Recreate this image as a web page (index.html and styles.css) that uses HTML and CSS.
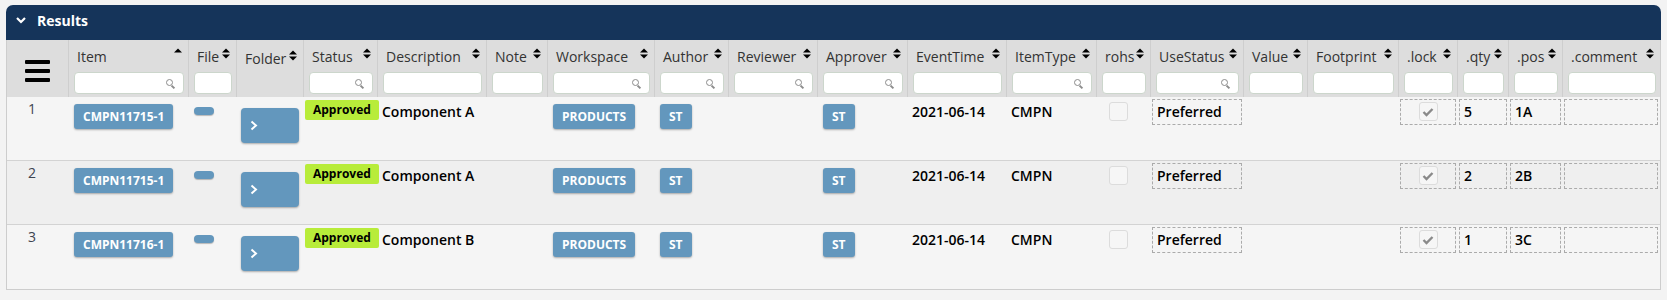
FILE: index.html
```html
<!DOCTYPE html>
<html lang="en">
<head>
  <meta charset="UTF-8">
  <title>Results</title>
  <link rel="stylesheet" href="styles.css">
</head>
<body>
  <div class="panel">
    <div class="panel-head">
      <svg class="chev" width="10" height="7" viewBox="0 0 10 7"><path d="M1 1 L5 5 L9 1" fill="none" stroke="#fff" stroke-width="2.2"/></svg>
      <span>Results</span>
    </div>

    <div class="panel-body">
      <table class="grid">
        <colgroup>
          <col style="width:62px"><col style="width:120px"><col style="width:48px"><col style="width:67px">
          <col style="width:74px"><col style="width:109px"><col style="width:61px"><col style="width:107px">
          <col style="width:74px"><col style="width:89px"><col style="width:90px"><col style="width:99px">
          <col style="width:90px"><col style="width:54px"><col style="width:93px"><col style="width:64px">
          <col style="width:91px"><col style="width:59px"><col style="width:51px"><col style="width:54px">
          <col style="width:97px">
        </colgroup>
        <thead>
          <tr>
            <th class="menu-col">
              <svg width="25" height="22" viewBox="0 0 25 22"><rect y="0" width="25" height="4" rx="1"/><rect y="9" width="25" height="4" rx="1"/><rect y="18" width="25" height="4" rx="1"/></svg>
            </th>
            <th><div class="th-label"><span>Item</span><svg class="sort" width="8" height="11" viewBox="0 0 8 11"><path d="M0 4.5 L4 0.5 L8 4.5 Z"/></svg></div><div class="filter search"><input type="text"></div></th>
            <th><div class="th-label"><span>File</span><svg class="sort" width="8" height="11" viewBox="0 0 8 11"><path d="M0 4.5 L4 0.5 L8 4.5 Z M0 6.5 L8 6.5 L4 10.5 Z"/></svg></div><div class="filter"><input type="text"></div></th>
            <th><div class="th-label low"><span>Folder</span><svg class="sort" width="8" height="11" viewBox="0 0 8 11"><path d="M0 4.5 L4 0.5 L8 4.5 Z M0 6.5 L8 6.5 L4 10.5 Z"/></svg></div></th>
            <th><div class="th-label"><span>Status</span><svg class="sort" width="8" height="11" viewBox="0 0 8 11"><path d="M0 4.5 L4 0.5 L8 4.5 Z M0 6.5 L8 6.5 L4 10.5 Z"/></svg></div><div class="filter search"><input type="text"></div></th>
            <th><div class="th-label"><span>Description</span><svg class="sort" width="8" height="11" viewBox="0 0 8 11"><path d="M0 4.5 L4 0.5 L8 4.5 Z M0 6.5 L8 6.5 L4 10.5 Z"/></svg></div><div class="filter"><input type="text"></div></th>
            <th><div class="th-label"><span>Note</span><svg class="sort" width="8" height="11" viewBox="0 0 8 11"><path d="M0 4.5 L4 0.5 L8 4.5 Z M0 6.5 L8 6.5 L4 10.5 Z"/></svg></div><div class="filter"><input type="text"></div></th>
            <th><div class="th-label"><span>Workspace</span><svg class="sort" width="8" height="11" viewBox="0 0 8 11"><path d="M0 4.5 L4 0.5 L8 4.5 Z M0 6.5 L8 6.5 L4 10.5 Z"/></svg></div><div class="filter search"><input type="text"></div></th>
            <th><div class="th-label"><span>Author</span><svg class="sort" width="8" height="11" viewBox="0 0 8 11"><path d="M0 4.5 L4 0.5 L8 4.5 Z M0 6.5 L8 6.5 L4 10.5 Z"/></svg></div><div class="filter search"><input type="text"></div></th>
            <th><div class="th-label"><span>Reviewer</span><svg class="sort" width="8" height="11" viewBox="0 0 8 11"><path d="M0 4.5 L4 0.5 L8 4.5 Z M0 6.5 L8 6.5 L4 10.5 Z"/></svg></div><div class="filter search"><input type="text"></div></th>
            <th><div class="th-label"><span>Approver</span><svg class="sort" width="8" height="11" viewBox="0 0 8 11"><path d="M0 4.5 L4 0.5 L8 4.5 Z M0 6.5 L8 6.5 L4 10.5 Z"/></svg></div><div class="filter search"><input type="text"></div></th>
            <th><div class="th-label"><span>EventTime</span><svg class="sort" width="8" height="11" viewBox="0 0 8 11"><path d="M0 4.5 L4 0.5 L8 4.5 Z M0 6.5 L8 6.5 L4 10.5 Z"/></svg></div><div class="filter"><input type="text"></div></th>
            <th><div class="th-label"><span>ItemType</span><svg class="sort" width="8" height="11" viewBox="0 0 8 11"><path d="M0 4.5 L4 0.5 L8 4.5 Z M0 6.5 L8 6.5 L4 10.5 Z"/></svg></div><div class="filter search"><input type="text"></div></th>
            <th><div class="th-label"><span>rohs</span><svg class="sort" width="8" height="11" viewBox="0 0 8 11"><path d="M0 4.5 L4 0.5 L8 4.5 Z M0 6.5 L8 6.5 L4 10.5 Z"/></svg></div><div class="filter"><input type="text"></div></th>
            <th><div class="th-label"><span>UseStatus</span><svg class="sort" width="8" height="11" viewBox="0 0 8 11"><path d="M0 4.5 L4 0.5 L8 4.5 Z M0 6.5 L8 6.5 L4 10.5 Z"/></svg></div><div class="filter search"><input type="text"></div></th>
            <th><div class="th-label"><span>Value</span><svg class="sort" width="8" height="11" viewBox="0 0 8 11"><path d="M0 4.5 L4 0.5 L8 4.5 Z M0 6.5 L8 6.5 L4 10.5 Z"/></svg></div><div class="filter"><input type="text"></div></th>
            <th><div class="th-label"><span>Footprint</span><svg class="sort" width="8" height="11" viewBox="0 0 8 11"><path d="M0 4.5 L4 0.5 L8 4.5 Z M0 6.5 L8 6.5 L4 10.5 Z"/></svg></div><div class="filter"><input type="text"></div></th>
            <th><div class="th-label"><span>.lock</span><svg class="sort" width="8" height="11" viewBox="0 0 8 11"><path d="M0 4.5 L4 0.5 L8 4.5 Z M0 6.5 L8 6.5 L4 10.5 Z"/></svg></div><div class="filter"><input type="text"></div></th>
            <th><div class="th-label"><span>.qty</span><svg class="sort" width="8" height="11" viewBox="0 0 8 11"><path d="M0 4.5 L4 0.5 L8 4.5 Z M0 6.5 L8 6.5 L4 10.5 Z"/></svg></div><div class="filter"><input type="text"></div></th>
            <th><div class="th-label"><span>.pos</span><svg class="sort" width="8" height="11" viewBox="0 0 8 11"><path d="M0 4.5 L4 0.5 L8 4.5 Z M0 6.5 L8 6.5 L4 10.5 Z"/></svg></div><div class="filter"><input type="text"></div></th>
            <th><div class="th-label"><span>.comment</span><svg class="sort" width="8" height="11" viewBox="0 0 8 11"><path d="M0 4.5 L4 0.5 L8 4.5 Z M0 6.5 L8 6.5 L4 10.5 Z"/></svg></div><div class="filter"><input type="text"></div></th>
          </tr>
        </thead>
        <tbody id="rows"></tbody>
      </table>
    </div>
  </div>

  <script>
    const items = [
      { item: "CMPN11715-1", desc: "Component A", qty: "5", pos: "1A" },
      { item: "CMPN11715-1", desc: "Component A", qty: "2", pos: "2B" },
      { item: "CMPN11716-1", desc: "Component B", qty: "1", pos: "3C" }
    ];

    const check = '<svg width="12" height="10" viewBox="0 0 12 10"><path d="M1.5 5 L4.5 8 L10.5 2" fill="none" stroke="#8a8a8a" stroke-width="2.4"/></svg>';
    const tbody = document.getElementById("rows");

    items.forEach((row, i) => {
      const tr = document.createElement("tr");
      tr.innerHTML = `
        <td class="num">${i + 1}</td>
        <td class="pad-btn"><span class="btn">${row.item}</span></td>
        <td class="pad-file"><span class="file-pill"></span></td>
        <td class="pad-folder"><span class="folder-btn"><svg width="8" height="11" viewBox="0 0 8 11"><path d="M1.5 1.5 L6 5.5 L1.5 9.5" fill="none" stroke="#fff" stroke-width="2"/></svg></span></td>
        <td class="pad-badge"><span class="badge">Approved</span></td>
        <td class="txt">${row.desc}</td>
        <td></td>
        <td class="pad-btn"><span class="btn">PRODUCTS</span></td>
        <td class="pad-btn"><span class="btn">ST</span></td>
        <td></td>
        <td class="pad-btn"><span class="btn">ST</span></td>
        <td class="txt">2021-06-14</td>
        <td class="txt">CMPN</td>
        <td class="pad-box"><span class="box"></span></td>
        <td class="edit"><div class="dashed">Preferred</div></td>
        <td></td>
        <td></td>
        <td class="edit"><div class="dashed center"><span class="box">${check}</span></div></td>
        <td class="edit"><div class="dashed">${row.qty}</div></td>
        <td class="edit"><div class="dashed">${row.pos}</div></td>
        <td class="edit"><div class="dashed"></div></td>`;
      tbody.appendChild(tr);
    });
  </script>
</body>
</html>
```

FILE: styles.css
```css
body {
  margin: 0;
  background: #f3f3f3;
  font-family: "Open Sans", "Noto Sans", sans-serif;
  color: #111;
}

.panel {
  margin: 5px 6px 0 6px;
}

.panel-head {
  height: 35px;
  box-sizing: border-box;
  padding: 0 0 4px 10px;
  display: flex;
  align-items: center;
  gap: 11px;
  background: #15345a;
  border-radius: 7px 7px 0 0;
  color: #fff;
  font-size: 14px;
  font-weight: 700;
}

.panel-body {
  background: #f5f5f5;
  border: 1px solid #cdcdcd;
  border-top: none;
}

.grid {
  width: 100%;
  table-layout: fixed;
  border-collapse: separate;
  border-spacing: 0;
}

/* header */

.grid th {
  background: #dddddd;
  border-right: 1px solid #cecece;
  vertical-align: top;
  padding: 0;
  font-weight: 400;
  text-align: left;
  height: 57px;
  box-sizing: border-box;
}

.grid th:last-child {
  border-right: none;
}

.grid th.menu-col {
  text-align: center;
  vertical-align: top;
  padding-top: 20px;
}

.th-label {
  display: flex;
  justify-content: space-between;
  align-items: flex-start;
  height: 32px;
  box-sizing: border-box;
  padding: 7px 6px 0 8px;
  font-size: 14px;
  line-height: 19px;
  color: #333;
  white-space: nowrap;
}

.th-label.low {
  padding-top: 9px;
}

.th-label .sort {
  margin-top: 1px;
  flex-shrink: 0;
}

.filter {
  position: relative;
  padding: 0 4px 3px 5px;
}

.filter input {
  display: block;
  width: 100%;
  height: 22px;
  box-sizing: border-box;
  border: 1px solid #ccd6cc;
  border-radius: 4px;
  background: #fff;
}

.filter.search::after {
  content: "";
  position: absolute;
  right: 15px;
  top: 7px;
  width: 5px;
  height: 5px;
  border: 1.5px solid #8c8c8c;
  border-radius: 50%;
}

.filter.search::before {
  content: "";
  position: absolute;
  right: 13px;
  top: 14px;
  width: 4px;
  height: 2px;
  background: #8c8c8c;
  transform: rotate(45deg);
}

/* rows */

.grid td {
  height: 64px;
  box-sizing: border-box;
  vertical-align: top;
  padding: 0;
  border-bottom: 1px solid #d3d3d3;
  font-size: 14px;
  line-height: 19px;
}

.grid tbody tr:nth-child(even) td {
  background: #efefef;
}

.grid tbody tr:last-child td {
  border-bottom: none;
}

.num {
  padding: 2px 0 0 21px !important;
  color: #3d4450;
}

.txt {
  padding: 5px 0 0 4px !important;
  font-weight: 600;
  color: #000;
}

.pad-btn {
  padding: 7px 0 0 5px !important;
}

.btn {
  display: inline-block;
  height: 25px;
  line-height: 25px;
  padding: 0 9px;
  background: #6397bd;
  color: #fff;
  font-size: 12px;
  font-weight: 700;
  border-radius: 3px;
  box-shadow: 0 1px 2px rgba(0, 0, 0, 0.3);
}

.pad-file {
  padding: 10px 0 0 5px !important;
}

.file-pill {
  display: block;
  width: 20px;
  height: 8px;
  background: #6397bd;
  border-radius: 4px;
  box-shadow: 0 1px 1px rgba(0, 0, 0, 0.25);
}

.pad-folder {
  padding: 11px 0 0 4px !important;
}

.folder-btn {
  display: flex;
  align-items: center;
  width: 58px;
  height: 35px;
  box-sizing: border-box;
  padding-left: 9px;
  background: #6397bd;
  border-radius: 4px;
  box-shadow: 0 1px 2px rgba(0, 0, 0, 0.3);
}

.pad-badge {
  padding: 2px 0 0 1px !important;
}

.badge {
  display: inline-block;
  height: 20px;
  line-height: 20px;
  padding: 0 8px;
  background: #b8ec3a;
  color: #000;
  font-size: 12px;
  font-weight: 700;
  border-radius: 2px;
}

.pad-box {
  padding: 5px 0 0 12px !important;
}

.box {
  display: flex;
  align-items: center;
  justify-content: center;
  width: 19px;
  height: 19px;
  box-sizing: border-box;
  border: 1px solid #dcdcdc;
  border-radius: 3px;
  background: #f6f6f6;
}

.edit {
  padding: 2px 2px 0 1px !important;
}

.dashed {
  height: 26px;
  box-sizing: border-box;
  border: 1px dashed #ababab;
  padding: 2px 4px 0 4px;
  font-weight: 600;
  color: #000;
}

.dashed.center {
  display: flex;
  justify-content: center;
  padding: 2px 0 0 0;
}
```
